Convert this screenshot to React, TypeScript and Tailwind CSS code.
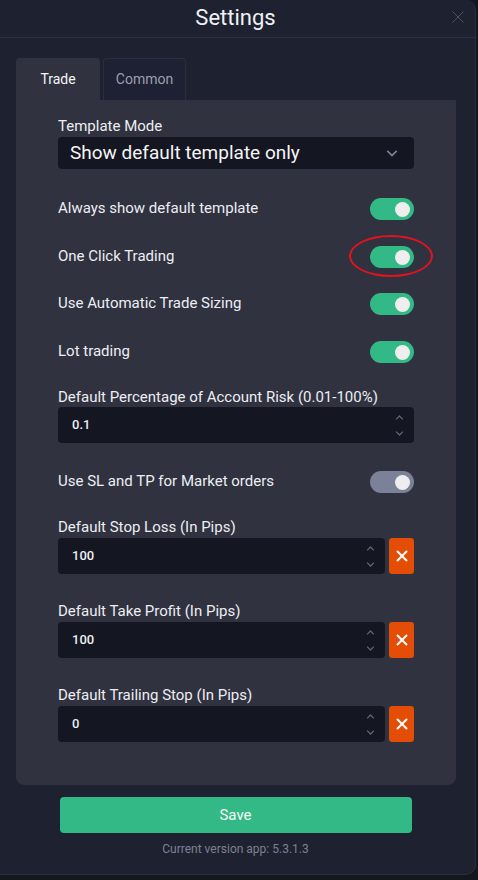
import { useState } from "react";

function Toggle({ on, muted }: { on: boolean; muted?: boolean }) {
  return (
    <div
      className={`flex h-[22px] w-[44px] items-center rounded-full px-[4px] ${
        muted ? "bg-[#7a8199]" : "bg-[#33b985]"
      } ${on ? "justify-end" : "justify-start"}`}
    >
      <div className="h-[15px] w-[15px] rounded-full bg-[#eeeeee]" />
    </div>
  );
}

function Chevron({ up, className }: { up?: boolean; className?: string }) {
  return (
    <svg viewBox="0 0 10 6" className={className} fill="none" stroke="currentColor" strokeWidth="1.5">
      {up ? <path d="M1 5.2 5 1.2 9 5.2" /> : <path d="M1 0.8 5 4.8 9 0.8" />}
    </svg>
  );
}

function NumberBox({ value }: { value: string }) {
  return (
    <div className="flex h-[36px] flex-1 items-center justify-between rounded-[4px] bg-[#141621] pl-[14px] pr-[10px]">
      <span className="text-[13px] font-medium text-[#eceef3]">{value}</span>
      <div className="flex flex-col items-center gap-[11px] text-[#5f6478]">
        <Chevron up className="h-[5px] w-[9px]" />
        <Chevron className="h-[5px] w-[9px]" />
      </div>
    </div>
  );
}

function ClearButton() {
  return (
    <button className="ml-[4px] flex h-[36px] w-[25px] items-center justify-center rounded-[3px] bg-[#e34d05]">
      <svg viewBox="0 0 12 12" className="h-[12px] w-[12px]" stroke="#ffffff" strokeWidth="2" fill="none">
        <path d="M1 1 11 11M11 1 1 11" />
      </svg>
    </button>
  );
}

function ToggleRow({ label, on, muted, ring, className }: { label: string; on: boolean; muted?: boolean; ring?: boolean; className?: string }) {
  return (
    <div className={`flex h-[22px] items-center justify-between ${className ?? ""}`}>
      <span className="-mt-[3px] text-[15px] leading-[20px] text-[#eceef3]">{label}</span>
      <div className="relative">
        <Toggle on={on} muted={muted} />
        {ring && (
          <div className="pointer-events-none absolute -left-[21px] -top-[11px] h-[42px] w-[84px] rounded-[50%] border-2 border-[#e0141e]" />
        )}
      </div>
    </div>
  );
}

function Label({ text, className }: { text: string; className?: string }) {
  return <span className={`h-[20px] text-[15px] leading-[20px] text-[#eceef3] ${className ?? ""}`}>{text}</span>;
}

export default function App() {
  const [tab, setTab] = useState("trade");

  return (
    <div className="min-h-[880px] w-[478px] bg-[#15171e] font-['Roboto','Liberation_Sans',sans-serif]">
      <div className="h-[875px] w-[476px] rounded-r-[10px] border-r border-b border-[#2b2e3b] bg-[#1e2130]">
        {/* header */}
        <div className="relative flex h-[38px] items-center justify-center border-b border-[#2d3040]">
          <span className="-ml-[4px] -mt-[3px] text-[22px] text-[#f0f1f4]">Settings</span>
          <svg viewBox="0 0 12 12" className="absolute right-[11px] top-[11px] h-[12px] w-[12px]" stroke="#4b4f62" strokeWidth="1" fill="none">
            <path d="M0.5 0.5 11.5 11.5M11.5 0.5 0.5 11.5" />
          </svg>
        </div>

        {/* tabs */}
        <div className="ml-[16px] mt-[20px] flex gap-[3px]">
          <button
            onClick={() => setTab("trade")}
            className="h-[42px] w-[84px] rounded-t-[4px] bg-[#30323f] text-[14px] text-[#f4f5f7]"
          >
            Trade
          </button>
          <button
            onClick={() => setTab("common")}
            className="h-[42px] w-[83px] rounded-t-[4px] border border-b-0 border-[#2b2e3e] bg-[#1e2133] text-[14px] text-[#9a9fae]"
          >
            Common
          </button>
        </div>

        {/* panel */}
        <div className="ml-[16px] w-[440px] rounded-b-[8px] bg-[#30323f] px-[42px] pb-[43px] pt-[16px]">
          {tab === "trade" && (
            <div className="flex flex-col">
              <Label text="Template Mode" />
              <div className="mt-px flex h-[32px] items-center justify-between rounded-[4px] bg-[#141621] pl-[12px] pr-[16px]">
                <span className="text-[19px] text-[#f4f5f7]">Show default template only</span>
                <Chevron className="h-[7px] w-[12px] text-[#7b8096]" />
              </div>

              <ToggleRow className="mt-[29px]" label="Always show default template" on />
              <ToggleRow className="mt-[26px]" label="One Click Trading" on ring />
              <ToggleRow className="mt-[25px]" label="Use Automatic Trade Sizing" on />
              <ToggleRow className="mt-[26px]" label="Lot trading" on />

              <Label className="mt-[24px]" text="Default Percentage of Account Risk (0.01-100%)" />
              <div className="flex">
                <NumberBox value="0.1" />
              </div>

              <ToggleRow className="mt-[28px]" label="Use SL and TP for Market orders" on muted />

              <Label className="mt-[24px]" text="Default Stop Loss (In Pips)" />
              <div className="mt-px flex">
                <NumberBox value="100" />
                <ClearButton />
              </div>

              <Label className="mt-[27px]" text="Default Take Profit (In Pips)" />
              <div className="mt-px flex">
                <NumberBox value="100" />
                <ClearButton />
              </div>

              <Label className="mt-[27px]" text="Default Trailing Stop (In Pips)" />
              <div className="mt-px flex">
                <NumberBox value="0" />
                <ClearButton />
              </div>
            </div>
          )}
        </div>

        {/* footer */}
        <div className="mt-[12px] flex flex-col items-center">
          <button className="-ml-[4px] h-[36px] w-[352px] rounded-[4px] bg-[#33b985] text-[15px] text-[#f6fbf8]">
            Save
          </button>
          <span className="-ml-[4px] mt-[7px] text-[12px] text-[#7c8294]">Current version app: 5.3.1.3</span>
        </div>
      </div>
    </div>
  );
}
